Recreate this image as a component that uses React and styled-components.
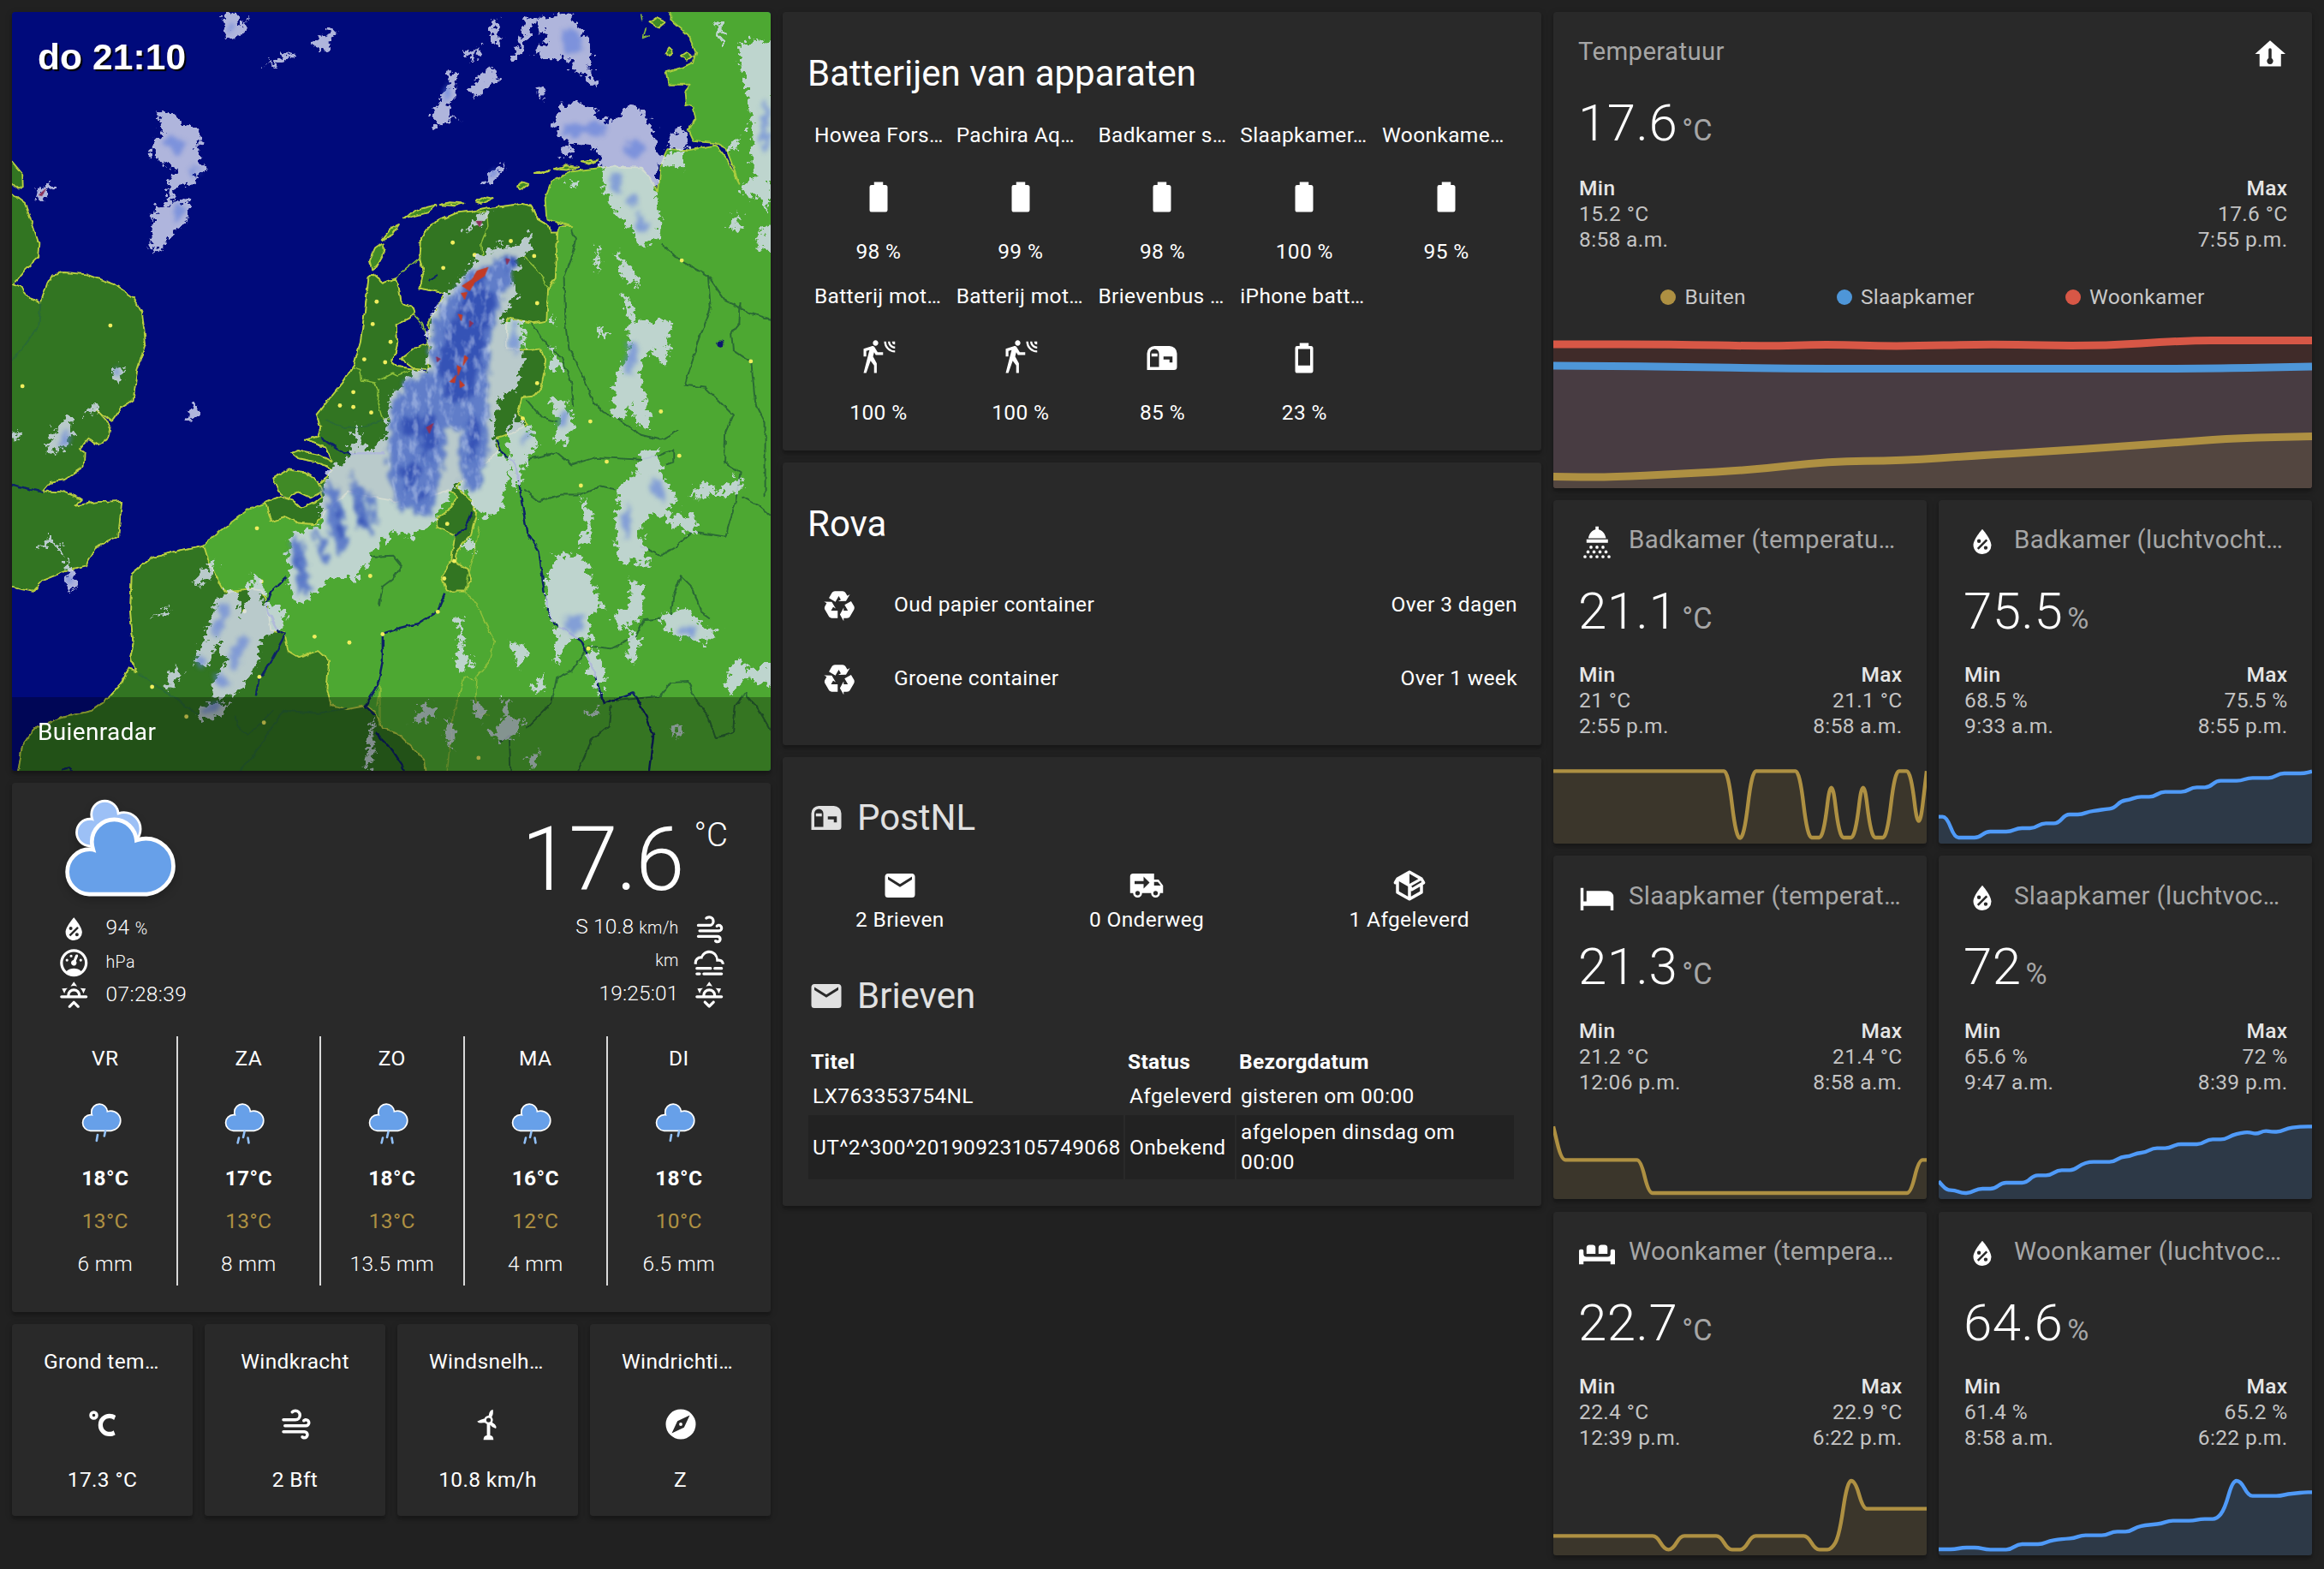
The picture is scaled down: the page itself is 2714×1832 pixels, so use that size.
import React from "react";
import styled, { createGlobalStyle } from "styled-components";

const GlobalStyle = createGlobalStyle`
  *, *::before, *::after { box-sizing: border-box; }
  html, body { margin: 0; padding: 0; background: #212121; }
  body {
    font-family: Roboto, "Noto Sans", sans-serif;
    font-size: 24.5px;
    line-height: 35px;
    letter-spacing: 0.36px;
    color: #fff;
    -webkit-font-smoothing: antialiased;
  }
`;

/* ---------- icons ---------- */

const ICONS = {
  battery:
    "M16.67,4H15V2H9V4H7.33A1.33,1.33 0 0,0 6,5.33V20.67C6,21.4 6.6,22 7.33,22H16.67A1.33,1.33 0 0,0 18,20.67V5.33C18,4.6 17.4,4 16.67,4Z",
  battery20:
    "M16,17H8V6H16M16.67,4H15V2H9V4H7.33A1.33,1.33 0 0,0 6,5.33V20.67C6,21.4 6.6,22 7.33,22H16.67A1.33,1.33 0 0,0 18,20.67V5.33C18,4.6 17.4,4 16.67,4Z",
  motion:
    "M10,0.2C9,0.2 8.2,1 8.2,2C8.2,3 9,3.8 10,3.8C11,3.8 11.8,3 11.8,2C11.8,1 11,0.2 10,0.2M15.67,1A7.33,7.33 0 0,0 23,8.33V7A6,6 0 0,1 17,1H15.67M18.33,1C18.33,3.58 20.42,5.67 23,5.67V4.33C21.16,4.33 19.67,2.84 19.67,1H18.33M21,1A2,2 0 0,0 23,3V1H21M7.92,4.03C7.75,4.03 7.58,4.06 7.42,4.11L2,5.8V11H3.8V7.33L5.91,6.67L2,22H3.8L6.67,13.89L9,17V22H10.8V15.59L8.31,11.05L9.04,8.18L10.12,10H15V8.2H11.38L9.38,4.87C9.08,4.37 8.54,4.03 7.92,4.03Z",
  mailbox:
    "M17,4H7A5,5 0 0,0 2,9V20H20A2,2 0 0,0 22,18V9A5,5 0 0,0 17,4M10,18H4V9A3,3 0 0,1 7,6A3,3 0 0,1 10,9V18M19,15H17V13H13V11H19V15M9,11H5V9H9V11Z",
  recycle:
    "M21.82,15.42L19.32,19.75C18.83,20.61 17.92,21.06 17,21H15V23L12.5,18.5L15,14V16H17.82L15.6,12.15L19.93,9.65L21.73,12.77C22.25,13.54 22.32,14.57 21.82,15.42M9.21,3.06H14.21C15.19,3.06 16.04,3.63 16.45,4.45L17.45,6.19L19.18,5.19L16.54,9.6L11.39,9.69L13.12,8.69L11.71,6.24L9.5,10.09L5.16,7.59L6.96,4.47C7.37,3.64 8.22,3.06 9.21,3.06M5.05,19.76L2.55,15.43C2.06,14.58 2.13,13.56 2.64,12.79L3.64,11.06L1.91,10.06L7.05,10.14L9.7,14.56L7.97,13.56L6.56,16H11V21H7.4C6.47,21.07 5.55,20.61 5.05,19.76Z",
  email:
    "M20,8L12,13L4,8V6L12,11L20,6M20,4H4C2.89,4 2,4.89 2,6V18A2,2 0 0,0 4,20H20A2,2 0 0,0 22,18V6C22,4.89 21.1,4 20,4Z",
  truck:
    "M3,4A2,2 0 0,0 1,6V17H3A3,3 0 0,0 6,20A3,3 0 0,0 9,17H15A3,3 0 0,0 18,20A3,3 0 0,0 21,17H23V12L20,8H17V4M10,6L14,10L10,14V11H4V9H10M17,9.5H19.5L21.47,12H17M6,15.5A1.5,1.5 0 0,1 7.5,17A1.5,1.5 0 0,1 6,18.5A1.5,1.5 0 0,1 4.5,17A1.5,1.5 0 0,1 6,15.5M18,15.5A1.5,1.5 0 0,1 19.5,17A1.5,1.5 0 0,1 18,18.5A1.5,1.5 0 0,1 16.5,17A1.5,1.5 0 0,1 18,15.5Z",
  parcel:
    "M2,10.96C1.5,10.68 1.35,10.07 1.63,9.59L3.13,7C3.24,6.8 3.41,6.66 3.6,6.58L11.43,2.18C11.59,2.06 11.79,2 12,2C12.21,2 12.41,2.06 12.57,2.18L20.47,6.62C20.66,6.72 20.82,6.88 20.91,7.08L22.36,9.6C22.64,10.08 22.47,10.69 22,10.96L21,11.54V16.5C21,16.88 20.79,17.21 20.47,17.38L12.57,21.82C12.41,21.94 12.21,22 12,22C11.79,22 11.59,21.94 11.43,21.82L3.53,17.38C3.21,17.21 3,16.88 3,16.5V10.96C2.7,11.13 2.32,11.14 2,10.96M12,4.15V4.15L12,10.85V10.85L17.96,7.5L12,4.15M5,15.91L11,19.29V12.58L5,9.21V15.91M19,15.91V12.69L14,15.59C13.67,15.77 13.3,15.76 13,15.6V19.29L19,15.91M13.85,13.36L20.13,9.73L19.55,8.72L13.27,12.35L13.85,13.36Z",
  homeThermo:
    "M12,3L2,12H5V20.3H19.3V12H22.3L12,3M12,8.2A1,1 0 0,1 13,9.2V14.9A2.1,2.1 0 1,1 11,14.9V9.2A1,1 0 0,1 12,8.2Z",
  humidity:
    "M12,3.25C12,3.25 6,10 6,14C6,17.32 8.69,20 12,20A6,6 0 0,0 18,14C18,10 12,3.25 12,3.25M14.47,9.97L15.53,11.03L9.53,17.03L8.47,15.97M9.75,10A1.25,1.25 0 0,1 11,11.25A1.25,1.25 0 0,1 9.75,12.5A1.25,1.25 0 0,1 8.5,11.25A1.25,1.25 0 0,1 9.75,10M14.25,14.5A1.25,1.25 0 0,1 15.5,15.75A1.25,1.25 0 0,1 14.25,17A1.25,1.25 0 0,1 13,15.75A1.25,1.25 0 0,1 14.25,14.5Z",
  gauge:
    "M12,2A10,10 0 0,0 2,12A10,10 0 0,0 12,22A10,10 0 0,0 22,12A10,10 0 0,0 12,2M12,4A8,8 0 0,1 20,12C20,14.4 19,16.5 17.3,18C15.9,16.7 14,16 12,16C10,16 8.2,16.7 6.7,18C5,16.5 4,14.4 4,12A8,8 0 0,1 12,4M14,5.89C13.62,5.9 13.26,6.15 13.1,6.54L11.81,9.77L11.71,10C11,10.13 10.41,10.6 10.14,11.26C9.73,12.29 10.23,13.45 11.26,13.86C12.29,14.27 13.45,13.77 13.86,12.74C14.12,12.08 14,11.32 13.57,10.76L13.67,10.5L14.96,7.29L14.97,7.26C15.17,6.75 14.92,6.17 14.41,5.96C14.28,5.91 14.15,5.89 14,5.89M10,6A1,1 0 0,0 9,7A1,1 0 0,0 10,8A1,1 0 0,0 11,7A1,1 0 0,0 10,6M7,9A1,1 0 0,0 6,10A1,1 0 0,0 7,11A1,1 0 0,0 8,10A1,1 0 0,0 7,9M17,9A1,1 0 0,0 16,10A1,1 0 0,0 17,11A1,1 0 0,0 18,10A1,1 0 0,0 17,9Z",
  windy:
    "M4,10A1,1 0 0,1 3,9A1,1 0 0,1 4,8H12A2,2 0 0,0 14,6A2,2 0 0,0 12,4C11.45,4 10.95,4.22 10.59,4.59C10.2,5 9.56,5 9.17,4.59C8.78,4.2 8.78,3.56 9.17,3.17C9.9,2.45 10.9,2 12,2A4,4 0 0,1 16,6A4,4 0 0,1 12,10H4M19,12A1,1 0 0,0 20,11A1,1 0 0,0 19,10C18.72,10 18.47,10.11 18.29,10.29C17.9,10.68 17.27,10.68 16.88,10.29C16.5,9.9 16.5,9.27 16.88,8.88C17.42,8.34 18.17,8 19,8A3,3 0 0,1 22,11A3,3 0 0,1 19,14H5A1,1 0 0,1 4,13A1,1 0 0,1 5,12H19M18,18H4A1,1 0 0,1 3,17A1,1 0 0,1 4,16H18A3,3 0 0,1 21,19A3,3 0 0,1 18,22C17.17,22 16.42,21.66 15.88,21.12C15.5,20.73 15.5,20.1 15.88,19.71C16.27,19.32 16.9,19.32 17.29,19.71C17.47,19.89 17.72,20 18,20A1,1 0 0,0 19,19A1,1 0 0,0 18,18Z",
  fog:
    "M3,15H13A1,1 0 0,1 14,16A1,1 0 0,1 13,17H3A1,1 0 0,1 2,16A1,1 0 0,1 3,15M16,15H21A1,1 0 0,1 22,16A1,1 0 0,1 21,17H16A1,1 0 0,1 15,16A1,1 0 0,1 16,15M1,12A5,5 0 0,1 6,7C7,4.65 9.3,3 12,3C15.43,3 18.24,5.66 18.5,9.03L19,9C21.19,9 22.97,10.76 23,13H21A2,2 0 0,0 19,11H17V10A5,5 0 0,0 12,5C9.5,5 7.45,6.82 7.06,9.19C6.73,9.07 6.37,9 6,9A3,3 0 0,0 3,12C3,12.35 3.06,12.69 3.17,13H1.1L1,12M3,19H5A1,1 0 0,1 6,20A1,1 0 0,1 5,21H3A1,1 0 0,1 2,20A1,1 0 0,1 3,19M8,19H21A1,1 0 0,1 22,20A1,1 0 0,1 21,21H8A1,1 0 0,1 7,20A1,1 0 0,1 8,19Z",
  sunrise:
    "M3,12H7A5,5 0 0,1 12,7A5,5 0 0,1 17,12H21A1,1 0 0,1 22,13A1,1 0 0,1 21,14H3A1,1 0 0,1 2,13A1,1 0 0,1 3,12M15,12A3,3 0 0,0 12,9A3,3 0 0,0 9,12H15M12,2L14.39,5.42C13.65,5.15 12.84,5 12,5C11.16,5 10.35,5.15 9.61,5.42L12,2M3.34,7L7.5,6.65C6.9,7.16 6.36,7.78 5.94,8.5C5.5,9.24 5.25,10 5.11,10.79L3.34,7M20.65,7L18.88,10.79C18.74,10 18.47,9.23 18.05,8.5C17.63,7.78 17.1,7.15 16.5,6.64L20.65,7M12.71,16.3L15.82,19.41C16.21,19.8 16.21,20.43 15.82,20.82C15.43,21.21 14.8,21.21 14.41,20.82L12,18.41L9.59,20.82C9.2,21.21 8.57,21.21 8.18,20.82C7.79,20.43 7.79,19.8 8.18,19.41L11.29,16.3C11.5,16.1 11.74,16 12,16C12.26,16 12.5,16.1 12.71,16.3Z",
  sunset:
    "M3,12H7A5,5 0 0,1 12,7A5,5 0 0,1 17,12H21A1,1 0 0,1 22,13A1,1 0 0,1 21,14H3A1,1 0 0,1 2,13A1,1 0 0,1 3,12M15,12A3,3 0 0,0 12,9A3,3 0 0,0 9,12H15M12,2L14.39,5.42C13.65,5.15 12.84,5 12,5C11.16,5 10.35,5.15 9.61,5.42L12,2M3.34,7L7.5,6.65C6.9,7.16 6.36,7.78 5.94,8.5C5.5,9.24 5.25,10 5.11,10.79L3.34,7M20.65,7L18.88,10.79C18.74,10 18.47,9.23 18.05,8.5C17.63,7.78 17.1,7.15 16.5,6.64L20.65,7M12.71,20.71L15.82,17.6C16.21,17.21 16.21,16.57 15.82,16.18C15.43,15.79 14.8,15.79 14.41,16.18L12,18.59L9.59,16.18C9.2,15.79 8.57,15.79 8.18,16.18C7.79,16.57 7.79,17.21 8.18,17.6L11.29,20.71C11.5,20.9 11.74,21 12,21C12.26,21 12.5,20.9 12.71,20.71Z",
  celsius:
    "M16.5,5C18.05,5 19.5,5.47 20.69,6.28L19.53,9.17C18.73,8.44 17.67,8 16.5,8C14,8 12,10 12,12.5C12,15 14,17 16.5,17C17.53,17 18.47,16.66 19.23,16.08L20.37,18.93C19.24,19.61 17.92,20 16.5,20A7.5,7.5 0 0,1 9,12.5A7.5,7.5 0 0,1 16.5,5M6,3A3,3 0 0,1 9,6A3,3 0 0,1 6,9A3,3 0 0,1 3,6A3,3 0 0,1 6,3M6,5A1,1 0 0,0 5,6A1,1 0 0,0 6,7A1,1 0 0,0 7,6A1,1 0 0,0 6,5Z",
  turbine:
    "M12.3,6.3A2.9,2.9 0 1,1 12.29,6.3M12.2,6.9L12.9,4.1Q13.4,2.5 15.2,2.1Q15.8,4.9 14.3,7.4ZM9.7,8.1L10,10.8L7.4,11.2Q5.6,11.3 4.7,10.1Q7,8.7 9.7,8.1ZM14.3,10.4L16.6,12.2Q17.8,13.5 17.2,14.9Q14.3,13.9 12.9,11.8ZM11.2,11.8H13.4V19.4Q15.6,19.7 15.6,22.4H8.9Q8.9,19.7 11.2,19.4Z",
  compass:
    "M14.19,14.19L6,18L9.81,9.81L18,6M12,2A10,10 0 0,0 2,12A10,10 0 0,0 12,22A10,10 0 0,0 22,12A10,10 0 0,0 12,2M12,10.9A1.1,1.1 0 0,0 10.9,12A1.1,1.1 0 0,0 12,13.1A1.1,1.1 0 0,0 13.1,12A1.1,1.1 0 0,0 12,10.9Z",
  bed: "M19,7H5V14H3V5H1V20H3V17H21V20H23V11A4,4 0 0,0 19,7",
  sofa:
    "M7,6H9A2,2 0 0,1 11,8V12H5V8A2,2 0 0,1 7,6M15,6H17A2,2 0 0,1 19,8V12H13V8A2,2 0 0,1 15,6M1,9H2A1,1 0 0,1 3,10V12A2,2 0 0,0 5,14H19A2,2 0 0,0 21,12V11L21,10A1,1 0 0,1 22,9H23A1,1 0 0,1 24,10V19H21V17H3V19H0V10A1,1 0 0,1 1,9Z",
};

const IconSvg = styled.svg`
  display: block;
  flex: none;
  width: ${(p) => p.$size}px;
  height: ${(p) => p.$size}px;
  fill: currentColor;
  overflow: visible;
`;

function Icon({ name, size = 42 }) {
  if (name === "shower") {
    const rows = [
      [15.4, [8, 12, 16]],
      [18.5, [6, 10, 14, 18]],
      [21.7, [4, 8, 12, 16, 20]],
    ];
    return (
      <IconSvg $size={size} viewBox="0 0 24 24">
        <path d="M11,1.5H13.1V3.5C15.6,4.1 17.4,6.2 18,9.4H6.2C6.8,6.2 8.6,4.1 11,3.5ZM5,10.1H19.3V12.4H5Z" />
        {rows.flatMap(([y, xs]) => xs.map((x) => <circle key={`${x}-${y}`} cx={x} cy={y} r="1.05" />))}
      </IconSvg>
    );
  }
  return (
    <IconSvg $size={size} viewBox="0 0 24 24">
      <path d={ICONS[name]} fillRule={name === "turbine" ? "nonzero" : "evenodd"} />
      {name === "turbine" && <circle cx="12.3" cy="9.2" r="1.5" fill="#292929" />}
    </IconSvg>
  );
}

/* ---------- page frame ---------- */

const Dashboard = styled.main`
  display: grid;
  grid-template-columns: repeat(3, 886px);
  gap: 14px;
  align-items: start;
  width: 2714px;
  height: 1832px;
  padding: 14px;
  overflow: hidden;
  background: #212121;
`;

const Column = styled.section`
  display: flex;
  flex-direction: column;
  gap: 14px;
`;

const Card = styled.article`
  display: flex;
  flex-direction: column;
  height: ${(p) => p.$height}px;
  border-radius: 3.5px;
  background: #292929;
  overflow: hidden;
  box-shadow: 0 3.5px 3.5px rgba(0, 0, 0, 0.2), 0 2px 9px rgba(0, 0, 0, 0.16);
`;

const CardTitle = styled.h1`
  margin: 0;
  font-size: 42px;
  line-height: 70px;
  font-weight: 400;
  letter-spacing: 0;
`;

/* ---------- radar ---------- */

const RadarCard = styled(Card)`
  position: relative;
`;

const RadarMap = styled.svg`
  display: block;
  width: 886px;
  height: 886px;
`;

const RadarTime = styled.div`
  position: absolute;
  left: 30px;
  top: 29px;
  font: 700 42.5px/48px "Liberation Sans", Arial, sans-serif;
  letter-spacing: 0.1px;
  text-shadow: 2px 2px 1px #000;
`;

const RadarFooter = styled.div`
  position: absolute;
  inset: auto 0 0 0;
  height: 86px;
  padding: 0 30px;
  font-size: 28px;
  line-height: 82px;
  background: rgba(0, 0, 0, 0.3);
`;

const CONTINENT =
  "M35,1560L45,1500 70,1465 120,1445 185,1430 215,1408 245,1375 258,1345 275,1350 262,1325 268,1295 262,1230 265,1155 300,1125 350,1110 410,1097 440,1070 500,1025 535,1012 565,1000 590,1008 605,1022 632,1012 648,1000 640,975 660,960 668,945 640,930 600,922 586,910 600,905 640,915 668,930 655,900 615,885 640,878 645,860 638,835 665,800 690,770 712,735 725,690 735,620 742,560 750,553 770,570 795,560 803,580 808,612 830,618 833,630 822,642 805,650 797,655 800,690 795,712 785,725 800,738 830,742 858,752 866,690 862,650 880,620 895,590 870,585 845,580 852,550 845,520 848,480 870,450 920,428 950,425 990,418 1050,410 1070,415 1080,440 1105,455 1108,468 1122,468 1126,455 1150,455 1125,448 1100,440 1097,400 1110,365 1150,345 1230,335 1290,337 1310,360 1325,385 1330,330 1345,300 1385,302 1440,292 1462,320 1488,370 1462,300 1440,288 1395,284 1385,262 1400,240 1395,215 1380,210 1378,185 1390,170 1345,170 1340,145 1375,135 1395,125 1400,105 1385,70 1350,40 1350,10 1565,10 1565,1560Z";

const NETHERLANDS =
  "M535,1012L565,1000 590,1008 605,1022 632,1012 648,1000 640,975 660,960 668,945 640,930 600,922 586,910 600,905 640,915 668,930 655,900 615,885 640,878 645,860 638,835 665,800 690,770 712,735 725,690 735,620 742,560 750,553 770,570 795,560 803,580 808,612 830,618 833,630 822,642 805,650 797,655 800,690 795,712 785,725 800,738 830,742 858,752 866,690 862,650 880,620 895,590 870,585 845,580 852,550 845,520 848,480 870,450 920,428 950,425 990,418 1050,410 1070,415 1080,440 1105,455 1108,468 1122,468 1118,560 1103,580 1100,645 1075,650 1020,640 1020,700 1060,705 1090,702 1098,725 1090,780 1075,797 1050,800 1042,830 1060,855 1030,872 1000,880 1003,905 975,935 918,978 950,1010 958,1035 948,1075 930,1095 918,1115 915,1130 942,1145 948,1165 935,1190 900,1190 888,1160 908,1130 915,1078 880,1060 878,1045 905,1025 922,1000 905,985 860,1000 800,1010 700,990 655,1030 635,1055 600,1052 575,1040 545,1050Z";

const FRANCE =
  "M35,1560L45,1500 70,1465 120,1445 185,1430 215,1408 245,1375 258,1345 275,1350 262,1325 268,1295 262,1230 265,1155 300,1125 350,1110 410,1097 420,1130 435,1160 452,1190 500,1185 528,1188 538,1215 545,1268 572,1272 580,1310 600,1322 640,1310 662,1330 657,1390 665,1418 700,1427 738,1420 755,1432 770,1465 800,1475 830,1505 855,1530 858,1560Z";

const BRITAIN = [
  "M10,320L24,325 45,350 46,376 36,380 10,355Z",
  "M10,385L24,390 50,410 65,450 78,490 76,518 50,543 24,575 10,580Z",
  "M10,568L24,572 40,578 60,600 82,608 95,570 105,552 130,548 175,552 230,572 268,598 286,630 293,690 276,745 268,805 245,820 225,848 195,825 222,855 218,880 200,895 178,882 160,905 170,912 168,940 130,965 100,970 85,988 130,990 165,1005 150,1018 195,1010 245,1008 238,1080 195,1100 172,1140 130,1150 85,1168 65,1190 24,1182 10,1180Z",
];

const ISLANDS = [
  "M748,542L744,525 755,500 770,490 772,510 758,535Z",
  "M768,483L785,462 803,453 790,472Z",
  "M813,440L835,423 878,412 860,428Z",
  "M885,412L905,407 933,409 915,414Z",
  "M958,405L975,396 992,400 970,410Z",
  "M1040,375L1050,366 1062,370 1050,380Z",
  "M1075,348L1105,342 1090,348Z",
  "M1113,340L1140,333 1165,336 1140,342Z",
  "M1168,326L1205,322 1185,330Z",
  "M550,962L580,945 612,950 640,968 650,988 625,1002 600,990 580,1003 560,990Z",
  "M1307,45L1320,36 1338,45 1325,56Z",
  "M1338,105L1345,95 1354,100 1348,112Z",
  "M1370,112L1382,104 1394,112 1382,122Z",
];

const FLEVOLAND = "M808,722L838,698 864,690 860,745 835,742Z";

const BORDERS = [
  "M795,560L845,518",
  "M833,632L850,650 860,690",
  "M970,515L968,490 982,455 980,430 955,425",
  "M1055,515L1080,540 1103,580",
  "M708,740L725,745 728,765 755,770 762,790 760,810 770,845 790,840",
  "M760,765L790,750 800,755 825,745",
  "M965,1060L950,1130 935,1190 960,1215 975,1250 995,1290 985,1330 960,1360 958,1400 965,1440 985,1440",
  "M900,1551L912,1440 935,1360 955,1370",
  "M760,1420L765,1380 765,1460",
  "M1290,30L1292,42M1300,55L1295,75 1308,70",
];

const RIVERS = [
  "M1148,460L1158,480 1150,520 1135,560 1138,640 1145,700 1175,760 1195,810 1228,840",
  "M1070,650L1105,700 1130,720 1150,770 1155,820",
  "M1330,490L1370,525 1425,555 1430,620 1405,690 1378,775 1420,780 1450,810 1475,835 1460,870 1458,930 1490,950 1480,1010 1460,1080 1400,1070",
  "M1425,555L1460,605 1510,630 1560,645",
  "M1490,610L1488,650 1472,670 1475,705 1512,730 1520,810 1540,850 1540,1000",
  "M1060,925L1120,910 1150,935 1200,920 1290,925 1330,915 1355,905 1355,930 1340,935",
  "M1055,985L1085,1008 1130,995 1170,995 1210,978 1240,985",
  "M1060,805L1090,840 1120,848",
  "M1240,840L1290,875 1330,885 1365,865",
  "M1495,1000L1530,1020 1560,1045",
  "M1290,1100L1330,1118 1360,1100 1395,1070",
  "M1350,1240L1355,1200 1370,1160 1395,1185 1410,1230 1430,1245",
  "M745,1120L790,1118 808,1140 790,1165 770,1180 763,1220",
  "M1330,1245L1295,1248 1280,1280 1230,1305 1185,1300 1150,1350 1120,1365 1110,1415 1060,1465",
  "M1240,1410L1330,1400 1350,1372 1385,1370 1400,1410 1425,1440 1440,1485 1475,1475 1480,1420 1500,1395 1525,1425 1560,1485",
  "M655,845L690,860 730,858 770,845",
  "M10,745L78,655 82,605",
  "M475,1560L510,1520 570,1430 640,1435 700,1425",
  "M475,1440L480,1465 500,1478 530,1450 550,1428",
  "M278,1355L345,1400 400,1440",
  "M1160,1560L1190,1490 1225,1460 1230,1420",
  "M1005,1495L1025,1480 1028,1560",
];

const NAVY_RIVERS = [
  "M1000,885L1010,910 1040,935 1050,1010 1060,1070 1085,1110 1095,1190 1110,1250 1170,1290 1195,1350 1215,1415",
  "M950,1030L935,1065 915,1080",
  "M895,1195L880,1230 840,1255 800,1265 770,1275 770,1330 760,1380 735,1420 755,1440",
  "M578,1160L545,1190 535,1220 560,1270 575,1275 545,1330 520,1370 515,1400",
  "M645,880L690,912 775,912",
  "M1215,1415L1275,1395 1300,1440 1315,1480 1305,1560",
  "M755,1475L790,1510 810,1540 815,1560",
  "M860,565L880,553",
  "M10,972L85,990",
  "M125,1551Q135,1540 145,1551",
];

const RAIN_LIGHT = [
  "M960,515L1000,495 1040,495 1065,465 1075,485 1045,525 1030,560 1040,600 1015,625 1005,655 1030,645 1055,655 1050,740 1040,780 1000,810 990,850 1000,900 1025,930 1010,1030 970,1040 920,970 895,1010 870,1055 830,1080 790,1070 750,1110 720,1165 665,1165 630,1195 600,1215 582,1180 578,1120 590,1075 640,1060 655,960 670,935 700,930 710,890 740,910 775,880 785,800 830,750 860,745 865,650 885,600 930,560Z",
  "M712,850L732,885 730,920 712,890Z",
  "M312,225L350,228 375,255 402,262 398,305 415,340 385,370 350,375 345,410 385,400 375,445 345,470 318,510 302,495 308,430 335,400 340,365 360,345 308,315 308,285 330,265Z",
  "M450,30L475,25 485,50 500,38 495,60 455,80Z",
  "M630,88L660,65 680,60 655,102 640,100Z",
  "M530,135L565,112 587,105 575,125Z",
  "M870,235L890,190 905,145 920,145 915,195 895,235 925,235 875,255Z",
  "M985,45L998,35 1005,80 990,90Z",
  "M1055,35L1080,35 1045,120 1028,122 1045,85Z",
  "M1075,35L1150,28 1165,60 1192,85 1190,130 1165,150 1140,115 1110,120 1075,110 1100,80Z",
  "M1190,140L1205,180 1160,135Z",
  "M930,105L970,95 955,120Z",
  "M945,180L985,135 1005,155 960,195Z",
  "M1075,180L1095,175 1095,205Z",
  "M1112,255L1130,210 1170,205 1225,245 1265,210 1290,215 1315,260 1325,310 1380,305 1375,340 1325,330 1320,380 1330,440 1325,480 1295,500 1280,480 1235,420 1215,385 1210,330 1195,290 1140,285Z",
  "M1350,270L1375,255 1385,300 1345,300Z",
  "M1145,285L1155,300 1140,320 1125,310Z",
  "M975,370L990,340 1020,332 1000,355 980,375Z",
  "M935,468L965,430 985,425 975,450Z",
  "M72,400L80,380 100,365 102,385 85,402Z",
  "M1485,95L1515,80 1560,85 1560,330 1545,430 1530,400 1515,350 1510,230 1500,180Z",
  "M1440,50L1452,45 1460,100 1445,80Z",
  "M1465,300L1490,275 1480,305Z",
  "M1490,375L1525,355 1530,400 1500,395Z",
  "M1520,470L1560,450 1560,505 1530,500Z",
  "M1475,430L1490,430 1490,462 1470,465Z",
  "M1240,508L1285,560 1280,575 1255,565Z",
  "M1255,590L1270,600 1280,648 1350,645 1340,740 1310,700 1285,750 1300,800 1310,865 1280,850 1268,815 1255,845 1232,840 1235,780 1260,720 1268,660Z",
  "M1105,800L1140,810 1155,850 1140,890 1115,890 1125,850Z",
  "M1110,700L1140,750 1105,740Z",
  "M1105,630L1120,640 1115,660Z",
  "M1140,360L1165,365 1155,378Z",
  "M1035,840L1060,855 1085,890 1060,920 1040,990 1025,940 1020,880Z",
  "M1295,905L1325,905 1330,950 1365,1010 1340,1020 1370,1060 1310,1030 1285,1070 1310,1135 1245,1130 1240,1060 1245,980 1275,960Z",
  "M1170,1000L1190,1030 1190,1095 1165,1095 1178,1060Z",
  "M1385,1000L1420,965 1440,990 1490,955 1490,990 1420,1000Z",
  "M1330,1035L1400,1040 1395,1075 1350,1055Z",
  "M1120,1115L1175,1120 1190,1170 1215,1220 1180,1240 1190,1285 1150,1285 1115,1335 1120,1260 1100,1230 1100,1165Z",
  "M1265,1160L1298,1185 1290,1240 1260,1260 1290,1290 1275,1340 1262,1320 1268,1280 1232,1240 1270,1215Z",
  "M1330,1235L1380,1225 1410,1255 1450,1270 1420,1290 1385,1285 1340,1270Z",
  "M1175,1320L1195,1305 1220,1350 1205,1400 1195,1370Z",
  "M1470,1340L1485,1325 1510,1350 1560,1330 1560,1385 1500,1365 1475,1395 1460,1380Z",
  "M1025,1290L1065,1300 1045,1345Z",
  "M920,1245L930,1245 932,1310 955,1330 930,1355 912,1330 925,1310Z",
  "M1070,1385L1095,1355 1090,1395Z",
  "M1195,525L1205,490 1205,550Z",
  "M1200,655L1225,675 1205,678Z",
  "M395,1330L415,1270 435,1215 455,1185 480,1195 485,1240 510,1155 530,1180 530,1215 580,1225 560,1270 530,1280 510,1350 480,1395 430,1405 430,1370 455,1330 440,1290 415,1340Z",
  "M330,1385L350,1345 370,1355 340,1390Z",
  "M395,1440L410,1415 470,1415 440,1440 405,1450Z",
  "M388,1170L430,1125 435,1150 405,1180Z",
  "M305,1240L345,1222 330,1240Z",
  "M75,1105L95,1080 120,1095 125,1118 105,1095Z",
  "M135,1120L155,1170 145,1190 132,1170Z",
  "M90,905L105,875 135,835 148,835 140,895 120,905Z",
  "M15,870L45,868 35,885 15,885Z",
  "M220,755L235,735 255,745 238,772Z",
  "M170,835L190,810 200,830Z",
  "M375,825L390,812 402,832 380,850Z",
  "M985,1480L1010,1450 1025,1440 1055,1450 1045,1475 1010,1490Z",
  "M830,1455L850,1415 885,1425 855,1450Z",
  "M900,1450L915,1460 910,1510 895,1480Z",
  "M950,1410L975,1420 970,1450 955,1440Z",
  "M1015,1405L1025,1410 1020,1440 1010,1440Z",
  "M748,1445L755,1480 745,1551 735,1551Z",
  "M1060,1530L1090,1510 1070,1545Z",
  "M1175,1440L1205,1425 1195,1445Z",
  "M1350,1470L1372,1460 1370,1485Z",
  "M930,1100L948,1085 955,1112Z",
];

const RAIN_MID = [
  "M945,550L1030,510 1030,560 1003,610 988,680 980,800 984,870 966,995 932,975 926,870 900,855 892,920 870,1040 800,1020 780,930 786,820 825,765 872,750 866,680 890,610Z",
  "M656,965L678,985 700,1090 685,1120 660,1060Z",
  "M703,945L730,990 752,1080 722,1060Z",
  "M584,1080L608,1085 626,1185 600,1200Z",
  "M632,1070L652,1085 664,1130 648,1130Z",
  "M735,990L752,1000 760,1050 748,1040Z",
];

const RAIN_DEEP = [
  "M945,570L985,535 968,585 1000,595 980,655 968,730 945,810 900,800 882,740 890,690 918,630Z",
  "M1010,515L1038,512 1028,545Z",
  "M805,845L840,838 850,870 815,880Z",
  "M850,840L870,830 885,880 860,925 845,890Z",
  "M830,920L850,940 825,990 805,950Z",
  "M948,830L965,840 955,930 942,920Z",
  "M835,1000L862,985 855,1015Z",
  "M675,1010L690,1080 680,1080Z",
  "M712,985L738,1060 728,1060Z",
  "M594,1105L610,1160 600,1160Z",
];

const RAIN_RED = [
  "M930,575L950,562 960,545 982,538 975,555 955,568 945,585Z",
  "M928,590L940,588 935,602Z",
  "M922,632L930,634 928,645Z",
  "M935,715L942,720 932,735Z",
  "M920,735L928,740 922,755Z",
  "M905,768L918,755 915,770Z",
  "M925,765L935,775 926,780Z",
];

const RAIN_CRIMSON = [
  "M878,718L886,722 880,728Z",
  "M858,860L872,852 864,872Z",
  "M945,645L952,650 945,658Z",
  "M958,445L970,445 965,456Z",
  "M1018,520L1026,522 1020,532Z",
  "M78,392L92,380 84,394Z",
];

const SOFT_BLUE = [
  [352, 290, 28, 20, 40], [360, 430, 8, 20, 20], [1150, 85, 22, 34, -20], [1155, 262, 32, 16, 0], [1200, 258, 26, 20, 0],
  [1280, 300, 26, 24, 0], [1240, 365, 14, 30, 0], [1275, 400, 16, 14, 0], [1290, 450, 12, 26, -20], [1270, 720, 14, 40, 10],
  [1325, 985, 15, 35, -20], [1262, 1050, 12, 45, 0], [1155, 1255, 28, 20, 0], [1385, 1270, 24, 12, 0], [445, 1245, 12, 46, 20],
  [480, 1310, 14, 46, 20], [445, 1370, 22, 14, 40], [405, 1328, 12, 12, 0], [425, 1425, 26, 12, -20], [130, 880, 10, 24, 20],
  [1540, 255, 10, 60, 0], [390, 345, 10, 18, 0], [992, 350, 8, 14, 30], [140, 1165, 6, 18, 0], [235, 750, 8, 10, 0],
  [1135, 840, 8, 20, 0], [1055, 880, 8, 20, 0], [465, 55, 6, 12, 0], [900, 185, 6, 26, 20], [1035, 680, 9, 40, 0],
];

const CITIES = [
  [758, 607], [750, 652], [786, 688], [733, 723], [775, 729], [711, 789], [684, 816], [711, 819], [747, 830], [911, 488],
  [892, 539], [955, 513], [1028, 485], [1075, 515], [1081, 610], [1081, 771], [1052, 842], [900, 1054], [914, 1129], [894, 1164],
  [517, 1063], [745, 1159], [881, 1231], [770, 1276], [633, 1281], [703, 1293], [492, 1230], [522, 1362], [306, 1382], [375, 1442],
  [531, 1454], [222, 655], [45, 777], [1372, 524], [1511, 727], [1330, 828], [1188, 848], [1367, 917], [1221, 929], [1169, 977],
  [1184, 1305], [963, 1525], [526, 1170],
];

const Paths = ({ list, ...rest }) => (
  <g {...rest}>
    {list.map((d, i) => (
      <path key={i} d={d} />
    ))}
  </g>
);

function Radar() {
  return (
    <RadarCard $height={886}>
      <RadarMap viewBox="24 24 1527 1527">
        <defs>
          <filter id="coast" x="-5%" y="-5%" width="110%" height="110%">
            <feTurbulence type="fractalNoise" baseFrequency="0.06" numOctaves="2" seed="4" />
            <feDisplacementMap in="SourceGraphic" scale="9" xChannelSelector="R" yChannelSelector="G" />
          </filter>
          <filter id="ragged" x="-5%" y="-5%" width="110%" height="110%">
            <feTurbulence type="fractalNoise" baseFrequency="0.075" numOctaves="4" seed="11" />
            <feDisplacementMap in="SourceGraphic" scale="34" xChannelSelector="R" yChannelSelector="G" />
          </filter>
          <filter id="streaks" x="-5%" y="-5%" width="110%" height="110%">
            <feTurbulence type="fractalNoise" baseFrequency="0.09 0.05" numOctaves="4" seed="7" />
            <feDisplacementMap in="SourceGraphic" scale="38" xChannelSelector="R" yChannelSelector="G" />
            <feGaussianBlur stdDeviation="4" />
          </filter>
          <filter id="speckle" x="0" y="0" width="100%" height="100%">
            <feTurbulence type="fractalNoise" baseFrequency="0.07 0.035" numOctaves="3" seed="3" />
            <feColorMatrix values="0 0 0 0 0.6  0 0 0 0 0.7  0 0 0 0 0.88  3.6 0 0 0 -1.7" />
            <feComposite in2="SourceGraphic" operator="in" />
          </filter>
          <filter id="soft" x="-50%" y="-50%" width="200%" height="200%">
            <feTurbulence type="fractalNoise" baseFrequency="0.06" numOctaves="3" seed="9" />
            <feDisplacementMap in="SourceGraphic" scale="30" xChannelSelector="R" yChannelSelector="G" />
            <feGaussianBlur stdDeviation="5" />
          </filter>
        </defs>
        <rect x="24" y="24" width="1527" height="1527" fill="#000a7b" />
        <g filter="url(#coast)" stroke="#b9cf42" strokeWidth="3.2" strokeLinejoin="round">
          <path d={CONTINENT} fill="#4da831" stroke="#a9cc3e" />
          <path d={NETHERLANDS} fill="#337520" />
          <path d={FRANCE} fill="#337520" />
          <path d={FLEVOLAND} fill="#337520" />
          <Paths list={BRITAIN} fill="#337520" />
          <Paths list={ISLANDS} fill="#3f8a26" />
          <Paths list={BORDERS} fill="none" stroke="#8fc03a" strokeWidth="2.5" />
        </g>
        <g filter="url(#coast)" fill="none" strokeLinejoin="round">
          <Paths list={RIVERS} stroke="#2a6a34" strokeWidth="3.4" />
          <Paths list={NAVY_RIVERS} stroke="#0a2466" strokeWidth="4.2" />
          <circle cx="1450" cy="692" r="7" fill="#0a1670" />
        </g>
        <g fill="#f1ee5e">
          {CITIES.map(([x, y]) => (
            <circle key={`${x}-${y}`} cx={x} cy={y} r="4.2" />
          ))}
        </g>
        <Paths list={RAIN_LIGHT} fill="#dbe0f6" opacity="0.8" filter="url(#ragged)" />
        <g fill="#5c7bdc" opacity="0.6" filter="url(#soft)">
          {SOFT_BLUE.map(([x, y, rx, ry, a], i) => (
            <ellipse key={i} cx={x} cy={y} rx={rx * 0.8} ry={ry * 0.8} transform={`rotate(${a} ${x} ${y})`} />
          ))}
        </g>
        <Paths list={RAIN_MID} fill="#5877c9" opacity="0.92" filter="url(#streaks)" />
        <Paths list={RAIN_DEEP} fill="#2d4cb2" opacity="0.85" filter="url(#streaks)" />
        <path d={RAIN_MID[0]} filter="url(#speckle)" opacity="0.42" />
        <Paths list={RAIN_RED} fill="#c33b25" stroke="#c33b25" strokeWidth="1.5" />
        <Paths list={RAIN_CRIMSON} fill="#8c3058" stroke="#8c3058" strokeWidth="1.5" />
      </RadarMap>
      <RadarTime>do 21:10</RadarTime>
      <RadarFooter>Buienradar</RadarFooter>
    </RadarCard>
  );
}

/* ---------- weather ---------- */

const CLOUD =
  "M47.7,35.4c0-4.6-3.7-8.2-8.2-8.2c-1,0-1.9,0.2-2.8,0.5c-0.3-3.4-3.1-6.2-6.6-6.2c-3.7,0-6.7,3-6.7,6.7c0,0.8,0.2,1.6,0.4,2.3c-0.3-0.1-0.7-0.1-1-0.1c-3.7,0-6.7,3-6.7,6.7c0,3.6,2.9,6.6,6.5,6.7l17.2,0C44.2,43.3,47.7,39.8,47.7,35.4z";

const WeatherTop = styled.div`
  display: flex;
  justify-content: space-between;
  height: 152px;
  padding: 15px 50px 0 54px;
`;

const CloudySvg = styled.svg`
  width: 150px;
  height: 130px;
  overflow: visible;
  filter: drop-shadow(0 5px 5px rgba(0, 0, 0, 0.2));
`;

const Temperature = styled.div`
  display: flex;
  align-items: flex-start;
  font-weight: 300;
  font-size: 103px;
  line-height: 120px;
  letter-spacing: -1.9px;
  padding-top: 15px;
`;

const TemperatureUnit = styled.span`
  margin: 4px 0 0 13px;
  font-size: 38.5px;
  line-height: 54px;
  letter-spacing: 0;
`;

const Readings = styled.div`
  display: flex;
  justify-content: space-between;
  height: 144px;
  padding: 0 53px;
`;

const ReadingList = styled.div`
  display: flex;
  flex-direction: column;
  align-items: ${(p) => (p.$end ? "flex-end" : "flex-start")};
`;

const Reading = styled.div`
  display: flex;
  flex-direction: ${(p) => (p.$end ? "row-reverse" : "row")};
  align-items: center;
  gap: ${(p) => (p.$end ? 16 : 18)}px;
  height: 38.5px;
  font-weight: 300;
  letter-spacing: ${(p) => (p.$end ? 0.15 : 0.36)}px;

  & > span {
    padding-bottom: ${(p) => (p.$end ? 6 : 3)}px;
  }

  small {
    font-size: 19.6px;
  }
`;

const Forecast = styled.div`
  display: grid;
  grid-template-columns: repeat(5, 1fr);
  height: 289px;
  margin: 0 22.5px 0 26px;
`;

const Day = styled.div`
  display: flex;
  flex-direction: column;
  align-items: center;
  line-height: 50px;
  border-right: ${(p) => (p.$last ? "2px solid transparent" : "2px solid #d9d9d9")};
`;

const DayName = styled.div`
  line-height: 51px;
`;

const DayIcon = styled.svg`
  width: 50px;
  height: 57px;
  margin: 17px 4px 16px 0;
  overflow: visible;
`;

const High = styled.div`
  font-weight: 700;
`;

const Low = styled.div`
  color: #ae9042;
`;

const Rain = styled.div`
  font-weight: 300;
`;

const DAYS = [
  ["VR", "18°C", "13°C", "6 mm", 2],
  ["ZA", "17°C", "13°C", "8 mm", 3],
  ["ZO", "18°C", "13°C", "13.5 mm", 3],
  ["MA", "16°C", "12°C", "4 mm", 3],
  ["DI", "18°C", "10°C", "6.5 mm", 2],
];

const DROPS = {
  2: "M18,38L16.8,45M27,34L25.8,39.5",
  3: "M16,41.5L14.6,47.5M22.5,34.5L21,41M26.5,41.5L27.5,47.5",
};

function Weather() {
  return (
    <Card $height={617.5}>
      <WeatherTop>
        <CloudySvg viewBox="0 0 150 130" stroke="#fff" strokeWidth="1.2">
          <path d={CLOUD} fill="#9cc0f6" transform="translate(-16.5 -44.5) scale(2.36)" />
          <path d={CLOUD} fill="#67a0e9" transform="translate(-52.5 -56.5) scale(3.92)" />
        </CloudySvg>
        <Temperature>
          17.6<TemperatureUnit>°C</TemperatureUnit>
        </Temperature>
      </WeatherTop>
      <Readings>
        <ReadingList>
          <Reading>
            <Icon name="humidity" size={38.5} />
            <span>94 <small>%</small></span>
          </Reading>
          <Reading>
            <Icon name="gauge" size={38.5} />
            <span><small>hPa</small></span>
          </Reading>
          <Reading>
            <Icon name="sunrise" size={38.5} />
            <span>07:28:39</span>
          </Reading>
        </ReadingList>
        <ReadingList $end>
          <Reading $end>
            <Icon name="windy" size={38.5} />
            <span>S 10.8 <small>km/h</small></span>
          </Reading>
          <Reading $end>
            <Icon name="fog" size={38.5} />
            <span><small>km</small></span>
          </Reading>
          <Reading $end>
            <Icon name="sunset" size={38.5} />
            <span>19:25:01</span>
          </Reading>
        </ReadingList>
      </Readings>
      <Forecast>
        {DAYS.map(([name, high, low, rain, drops], i) => (
          <Day key={name} $last={i === DAYS.length - 1}>
            <DayName>{name}</DayName>
            <DayIcon viewBox="0 0 50 57">
              <path d={CLOUD} fill="#67a0e9" stroke="#fff" strokeWidth="1.2" transform="translate(-22 -19) scale(1.4)" />
              <path d={DROPS[drops]} stroke="#91c0f8" strokeWidth="2.6" strokeLinecap="round" fill="none" transform="translate(0 9)" />
            </DayIcon>
            <High>{high}</High>
            <Low>{low}</Low>
            <Rain>{rain}</Rain>
          </Day>
        ))}
      </Forecast>
    </Card>
  );
}

/* ---------- glance tiles ---------- */

const TileRow = styled.div`
  display: grid;
  grid-template-columns: repeat(4, 211px);
  gap: 14px;
`;

const Tile = styled(Card)`
  align-items: center;
  padding: 26px 37px 0;
`;

const GlanceName = styled.div`
  width: ${(p) => p.$width}px;
  white-space: nowrap;
  text-align: ${(p) => (p.$center ? "center" : "left")};
`;

const GlanceIcon = styled.div`
  display: flex;
  align-items: center;
  justify-content: center;
  height: 42px;
  margin: ${(p) => p.$top}px 0 ${(p) => p.$bottom}px;
`;

const TILES = [
  ["Grond tem…", "celsius", "17.3 °C"],
  ["Windkracht", "windy", "2 Bft"],
  ["Windsnelh…", "turbine", "10.8 km/h"],
  ["Windrichti…", "compass", "Z"],
];

function Tiles() {
  return (
    <TileRow>
      {TILES.map(([name, icon, value]) => (
        <Tile key={name} $height={224}>
          <GlanceName $width={137} $center={name === "Windkracht"}>{name}</GlanceName>
          <GlanceIcon $top={35} $bottom={26}>
            <Icon name={icon} />
          </GlanceIcon>
          <div>{value}</div>
        </Tile>
      ))}
    </TileRow>
  );
}

/* ---------- batteries ---------- */

const BatteryCard = styled(Card)`
  padding: 37px 28px 0 29px;
`;

const Glance = styled.div`
  display: grid;
  grid-template-columns: repeat(5, 1fr);
  grid-auto-rows: 188px;
  margin-top: 19px;
`;

const GlanceItem = styled.div`
  display: flex;
  flex-direction: column;
  align-items: center;
`;

const BATTERIES = [
  ["Howea Fors…", "battery", "98 %"],
  ["Pachira Aq…", "battery", "99 %"],
  ["Badkamer s…", "battery", "98 %"],
  ["Slaapkamer…", "battery", "100 %"],
  ["Woonkame…", "battery", "95 %"],
  ["Batterij mot…", "motion", "100 %"],
  ["Batterij mot…", "motion", "100 %"],
  ["Brievenbus …", "mailbox", "85 %"],
  ["iPhone batt…", "battery20", "23 %"],
];

function Batteries() {
  return (
    <BatteryCard $height={511.5}>
      <CardTitle>Batterijen van apparaten</CardTitle>
      <Glance>
        {BATTERIES.map(([name, icon, value], i) => (
          <GlanceItem key={i}>
            <GlanceName $width={150}>{name}</GlanceName>
            <GlanceIcon $top={34} $bottom={24.5}>
              <Icon name={icon} />
            </GlanceIcon>
            <div>{value}</div>
          </GlanceItem>
        ))}
      </Glance>
    </BatteryCard>
  );
}

/* ---------- waste collection ---------- */

const RovaCard = styled(Card)`
  padding: 37px 28px 0 29px;
`;

const EntityList = styled.div`
  display: flex;
  flex-direction: column;
  gap: 16px;
  margin-top: 24px;
`;

const EntityRow = styled.div`
  display: flex;
  align-items: center;
  height: 70px;
  padding-left: 16px;

  & > span:nth-of-type(1) {
    flex: 1;
    margin-left: 43px;
  }
`;

function Rova() {
  return (
    <RovaCard $height={330}>
      <CardTitle>Rova</CardTitle>
      <EntityList>
        <EntityRow>
          <Icon name="recycle" />
          <span>Oud papier container</span>
          <span>Over 3 dagen</span>
        </EntityRow>
        <EntityRow>
          <Icon name="recycle" />
          <span>Groene container</span>
          <span>Over 1 week</span>
        </EntityRow>
      </EntityList>
    </RovaCard>
  );
}

/* ---------- post ---------- */

const PostCard = styled(Card)`
  padding: 36px 28px 0;
`;

const PostTitle = styled.h2`
  display: flex;
  align-items: center;
  gap: 15px;
  height: 70px;
  margin: 0;
  padding-left: 2px;
  font-size: 42px;
  font-weight: 400;
  line-height: 70px;
  letter-spacing: 0;
  color: #e1e1e1;
`;

const PostCounts = styled.div`
  display: flex;
  justify-content: space-between;
  margin: 23px 56px 37px 57px;
`;

const PostCount = styled.div`
  display: flex;
  flex-direction: column;
  align-items: center;
  gap: 1px;
`;

const LetterTable = styled.table`
  width: 828px;
  margin-top: 21px;
  table-layout: fixed;
  border-collapse: separate;
  border-spacing: 2px;
  text-align: left;

  th {
    padding: 1px 3px;
    font-weight: 700;
  }

  td {
    padding: 2.5px 5px;
    white-space: nowrap;
  }

  tbody tr:nth-child(even) td {
    background: #222;
  }
`;

const LetterCol = styled.col`
  width: ${(p) => p.$width}px;
`;

function Post() {
  return (
    <PostCard $height={524}>
      <PostTitle>
        <Icon name="mailbox" />
        <span>PostNL</span>
      </PostTitle>
      <PostCounts>
        <PostCount>
          <Icon name="email" />
          <span>2 Brieven</span>
        </PostCount>
        <PostCount>
          <Icon name="truck" />
          <span>0 Onderweg</span>
        </PostCount>
        <PostCount>
          <Icon name="parcel" />
          <span>1 Afgeleverd</span>
        </PostCount>
      </PostCounts>
      <PostTitle>
        <Icon name="email" />
        <span>Brieven</span>
      </PostTitle>
      <LetterTable>
        <colgroup>
          <LetterCol $width={368} />
          <LetterCol $width={128} />
          <LetterCol $width={324} />
        </colgroup>
        <thead>
          <tr>
            <th>Titel</th>
            <th>Status</th>
            <th>Bezorgdatum</th>
          </tr>
        </thead>
        <tbody>
          <tr>
            <td>LX763353754NL</td>
            <td>Afgeleverd</td>
            <td>gisteren om 00:00</td>
          </tr>
          <tr>
            <td>UT^2^300^20190923105749068</td>
            <td>Onbekend</td>
            <td>
              afgelopen dinsdag om
              <br />
              00:00
            </td>
          </tr>
        </tbody>
      </LetterTable>
    </PostCard>
  );
}

/* ---------- sensor graphs ---------- */

const GraphCard = styled(Card)`
  padding: 0;
`;

const GraphHead = styled.header`
  display: flex;
  align-items: center;
  justify-content: ${(p) => (p.$split ? "space-between" : "flex-start")};
  height: 60px;
  margin: 18px 28px 0 ${(p) => (p.$split ? 29 : 30)}px;
  font-size: 29.4px;
  line-height: 36px;
`;

const GraphTitle = styled.span`
  color: #a6a6a6;
  white-space: nowrap;
  padding-bottom: ${(p) => (p.$indent ? 3 : 4)}px;
  margin-left: ${(p) => (p.$indent ? 16 : 0)}px;
`;

const GraphIcon = styled.span`
  padding-top: ${(p) => (p.$flush ? 2 : 3)}px;
`;

const GraphValue = styled.div`
  display: flex;
  align-items: baseline;
  margin: 16px 29px 0;
  font-weight: 300;
  font-size: 60px;
  line-height: 72px;
  letter-spacing: 0.5px;
`;

const GraphUnit = styled.span`
  margin-left: 5px;
  font-size: 34.3px;
  font-weight: 400;
  letter-spacing: 0.3px;
  color: #a6a6a6;
`;

const Extrema = styled.div`
  display: flex;
  justify-content: space-between;
  margin: ${(p) => (p.$tight ? 15.5 : 17)}px 28.5px 0 30px;
  line-height: 30px;
  color: #c4c4c4;
`;

const Extremum = styled.div`
  display: flex;
  flex-direction: column;
  text-align: ${(p) => (p.$end ? "right" : "left")};

  strong {
    font-weight: 500;
    color: #e6e6e6;
  }
`;

const Legend = styled.div`
  display: flex;
  justify-content: center;
  gap: 106px;
  margin-top: 34px;
  line-height: 36px;
  color: #c8c8c8;
`;

const LegendItem = styled.div`
  display: flex;
  align-items: center;
  gap: 10px;

  &::before {
    content: "";
    width: 18px;
    height: 18px;
    border-radius: 50%;
    background: ${(p) => p.$color};
  }
`;

const Plot = styled.svg`
  display: block;
  width: 100%;
  height: ${(p) => p.$height}px;
  margin-top: auto;
`;

/* Quadratic curve that runs through the midpoints of neighbouring samples. */
function smooth(points) {
  let d = `M${points[0][0]},${points[0][1]}`;
  for (let i = 1; i < points.length; i += 1) {
    const [x0, y0] = points[i - 1];
    const [x1, y1] = points[i];
    d += ` ${i === 1 ? "L" : ""}${(x0 + x1) / 2},${(y0 + y1) / 2} Q${x1},${y1}`;
  }
  const [lx, ly] = points[points.length - 1];
  return `${d} ${lx},${ly}`;
}

/* Expands [count, value] runs into one sample per quarter of an hour. */
const runs = (list) => list.flatMap(([n, v]) => Array(n).fill(v));

const GOLD = { line: "#ae9042", fill: "#3b362b" };
const BLUE = { line: "#4f9af8", fill: "#2d3947" };

function Sparkline({ data, color }) {
  const step = 436 / (data.length - 1);
  const line = smooth(data.map((v, i) => [i * step, v / 3]));
  return (
    <Plot $height={91} viewBox="0 0 436 91">
      <path d={`${line} L436,92 L0,92 Z`} fill={color.fill} />
      <path d={line} fill="none" stroke={color.line} strokeWidth="4.4" />
    </Plot>
  );
}

const RoomGrid = styled.div`
  display: grid;
  grid-template-columns: repeat(2, 436px);
  gap: 14.5px 14px;
`;

const ROOMS = [
  {
    icon: "shower", title: "Badkamer (temperatu…", value: "21.1", unit: "°C",
    min: ["21 °C", "2:55 p.m."], max: ["21.1 °C", "8:58 a.m."], color: GOLD,
    data: runs([[23, 19], [2, 254], [7, 19], [3, 252], [1, 19], [3, 252], [1, 19], [3, 252], [3, 19], [1, 252], [1, 19]]),
  },
  {
    icon: "humidity", title: "Badkamer (luchtvocht…", value: "75.5", unit: "%",
    min: ["68.5 %", "9:33 a.m."], max: ["75.5 %", "8:55 p.m."], color: BLUE,
    data: runs([[2, 179], [4, 252], [4, 231], [3, 219], [3, 202], [3, 171], [1, 160], [1, 157], [1, 152], [1, 150], [1, 123], [1, 120], [3, 109], [4, 92], [3, 76], [4, 53], [4, 43], [4, 27], [1, 20]]),
  },
  {
    icon: "bed", title: "Slaapkamer (temperat…", value: "21.3", unit: "°C",
    min: ["21.2 °C", "12:06 p.m."], max: ["21.4 °C", "8:58 a.m."], color: GOLD,
    data: runs([[1, 19], [11, 136], [34, 252], [2, 136]]),
  },
  {
    icon: "humidity", title: "Slaapkamer (luchtvoc…", value: "72", unit: "%",
    min: ["65.6 %", "9:47 a.m."], max: ["72 %", "8:39 p.m."], color: BLUE,
    data: runs([[1, 211], [2, 242], [1, 253], [1, 251], [3, 237], [4, 216], [3, 190], [3, 172], [1, 151], [4, 143], [1, 125], [1, 124], [1, 112], [1, 110], [3, 95], [4, 81], [3, 64], [1, 49], [1, 42], [1, 38], [1, 46], [1, 33], [1, 38], [1, 37], [1, 25], [1, 21], [2, 19]]),
  },
  {
    icon: "sofa", title: "Woonkamer (tempera…", value: "22.7", unit: "°C",
    min: ["22.4 °C", "12:39 p.m."], max: ["22.9 °C", "6:22 p.m."], color: GOLD,
    data: runs([[14, 205], [2, 253], [6, 205], [3, 253], [8, 205], [3, 253], [1, 205], [2, 12], [9, 110]]),
  },
  {
    icon: "humidity", title: "Woonkamer (luchtvoc…", value: "64.6", unit: "%",
    min: ["61.4 %", "8:58 a.m."], max: ["65.2 %", "6:22 p.m."], color: BLUE,
    data: runs([[3, 252], [3, 246], [4, 253], [4, 234], [1, 222], [1, 218], [1, 215], [1, 213], [4, 203], [3, 190], [1, 173], [1, 168], [1, 165], [1, 162], [4, 152], [3, 146], [1, 112], [2, 12], [5, 65], [1, 58], [1, 56], [2, 52]]),
  },
];

function MinMax({ min, max, tight }) {
  return (
    <Extrema $tight={tight}>
      <Extremum>
        <strong>Min</strong>
        <span>{min[0]}</span>
        <span>{min[1]}</span>
      </Extremum>
      <Extremum $end>
        <strong>Max</strong>
        <span>{max[0]}</span>
        <span>{max[1]}</span>
      </Extremum>
    </Extrema>
  );
}

const OUTSIDE = [[0, 171.4], [64, 172.5], [150, 168], [230, 164], [322, 153.5], [406, 153], [500, 146.5], [620, 139.5], [740, 130.5], [800, 126.5], [886, 124.5]];
const BEDROOM = [[0, 42], [135, 43], [280, 45.6], [520, 45.6], [760, 45.6], [886, 43]];
const LIVING = [[0, 17], [135, 16.8], [245, 19.4], [320, 17], [400, 19.6], [512, 16.6], [630, 19.6], [740, 12.4], [800, 12.6], [886, 12.6]];

function TemperatureCard() {
  const series = [
    [LIVING, "#d75746", "#402b29"],
    [BEDROOM, "#4e96d8", "#483c42"],
    [OUTSIDE, "#ae9042", "#534640"],
  ];
  return (
    <GraphCard $height={555.5}>
      <GraphHead $split>
        <GraphTitle>Temperatuur</GraphTitle>
        <GraphIcon $flush><Icon name="homeThermo" size={42} /></GraphIcon>
      </GraphHead>
      <GraphValue>17.6<GraphUnit>°C</GraphUnit></GraphValue>
      <MinMax min={["15.2 °C", "8:58 a.m."]} max={["17.6 °C", "7:55 p.m."]} />
      <Legend>
        <LegendItem $color="#ae9042">Buiten</LegendItem>
        <LegendItem $color="#4e96d8">Slaapkamer</LegendItem>
        <LegendItem $color="#d75746">Woonkamer</LegendItem>
      </Legend>
      <Plot $height={184.5} viewBox="0 0 886 184.5">
        {series.map(([points, , fill]) => (
          <path key={fill} d={`${smooth(points)} L886,186 L0,186 Z`} fill={fill} />
        ))}
        {series.map(([points, line]) => (
          <path key={line} d={smooth(points)} fill="none" stroke={line} strokeWidth="9" />
        ))}
      </Plot>
    </GraphCard>
  );
}

function Rooms() {
  return (
    <RoomGrid>
      {ROOMS.map((room) => (
        <GraphCard key={room.title} $height={401}>
          <GraphHead>
            <GraphIcon><Icon name={room.icon} /></GraphIcon>
            <GraphTitle $indent>{room.title}</GraphTitle>
          </GraphHead>
          <GraphValue>{room.value}<GraphUnit>{room.unit}</GraphUnit></GraphValue>
          <MinMax tight min={room.min} max={room.max} />
          <Sparkline data={room.data} color={room.color} />
        </GraphCard>
      ))}
    </RoomGrid>
  );
}

export default function App() {
  return (
    <>
      <GlobalStyle />
      <Dashboard>
        <Column>
          <Radar />
          <Weather />
          <Tiles />
        </Column>
        <Column>
          <Batteries />
          <Rova />
          <Post />
        </Column>
        <Column>
          <TemperatureCard />
          <Rooms />
        </Column>
      </Dashboard>
    </>
  );
}
